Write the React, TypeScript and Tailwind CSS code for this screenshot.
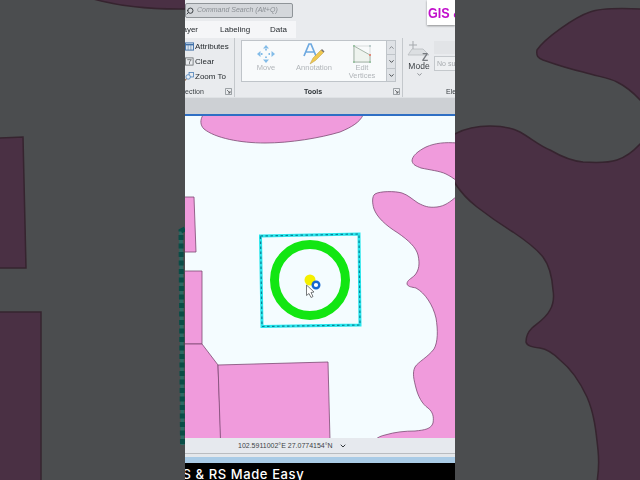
import { Search, ChevronDown, ChevronUp } from "lucide-react";

const SideLeft = () => (
  <svg viewBox="0 0 185 480" className="w-[185px] h-[480px] shrink-0 block">
    <rect width="185" height="480" fill="#4b4d4f" />
    <g fill="#4a3044" stroke="#36242f" strokeWidth="1.5">
      <path d="M90 -2 Q130 10 187 9 L187 -2 Z" />
      <path d="M-2 138 L23 137 L26 268 L-2 268 Z" />
      <path d="M-2 312 L41 312 L41 482 L-2 482 Z" />
    </g>
    <path d="M185 229 L181 231 L182.500 445" fill="none" stroke="#2a6a64" strokeWidth="3.500" />
    <path d="M185 229 L181 231 L182.500 445" fill="none" stroke="#0a4d47" strokeWidth="5" strokeDasharray="5 3.500" />
  </svg>
);

const SideRight = () => (
  <svg viewBox="455 0 185 480" className="w-[185px] h-[480px] shrink-0 block">
    <rect x="455" width="185" height="480" fill="#4b4d4f" />
    <g fill="#4a3044" stroke="#36242f" strokeWidth="1.5">
      <path d="M642 9 C620 8 600 8 590 12 C575 17 545 38 537 50 C536 56 538 58 543 60 C560 66 570 69 583 72 C600 77 610 78 617 82 C627 87 634 93 642 102 Z" />
      <path d="M453 135 C465 128 478 126 490 126 C505 126 512 128 520 132 C532 139 540 146 550 150 C562 157 572 161 583 162 C598 163 608 163 617 160 C627 157 634 151 642 142 L642 482 L597 482 C599 470 599 460 598 450 C596 430 594 413 587 397 C580 382 570 368 560 360 C553 353 547 349 540 348 C532 347 527 346 526 342 C526 336 528 332 532 328 C538 323 546 318 550 310 C554 303 554 296 553 290 C552 275 549 265 543 257 C535 247 525 240 513 232 C500 224 490 217 477 207 C468 200 460 192 453 180 Z" />
    </g>
  </svg>
);

const MoveIcon = () => (
  <svg viewBox="0 0 20 20" className="w-[20px] h-[20px]" fill="none" stroke="#83bce8" strokeWidth="1.800">
    <path d="M10 1 L7 4.500 H13 Z" fill="#83bce8" stroke="none" />
    <path d="M10 19 L7 15.500 H13 Z" fill="#83bce8" stroke="none" />
    <path d="M1 10 L4.500 7 V13 Z" fill="#83bce8" stroke="none" />
    <path d="M19 10 L15.500 7 V13 Z" fill="#83bce8" stroke="none" />
    <path d="M10 5 V7.500 M10 12.500 V15 M5 10 H7.500 M12.500 10 H15" strokeDasharray="1.500 1" />
  </svg>
);

const AnnotationIcon = () => (
  <svg viewBox="0 0 22 22" className="w-[22px] h-[22px]">
    <path d="M1 13 L6 1 H8 L13 13 M3 9 H11" fill="none" stroke="#6ea9e0" strokeWidth="1.700" />
    <path d="M7 21 L10 15 L18 7 L20.500 9.500 L12.500 17.500 Z" fill="#f0c84f" stroke="#b89a45" strokeWidth="0.500" />
    <path d="M18 7 L19 6 L21.500 8.500 L20.500 9.500 Z" fill="#77706a" />
  </svg>
);

const VerticesIcon = () => (
  <svg viewBox="0 0 20 20" className="w-[20px] h-[20px]">
    <path d="M2 2 L18 2 V18 H2 Z" fill="none" stroke="#cfd4d6" strokeWidth="0.800" />
    <path d="M2 2 L18 11 V18 H2 Z" fill="#eef3ee" stroke="#9cae9f" strokeWidth="0.900" />
    <rect x="1" y="1" width="2" height="2" fill="#9cc2a4" />
    <rect x="17" y="1" width="2" height="2" fill="#bcc" />
    <rect x="17" y="10" width="2" height="2" fill="#e08a7a" />
    <rect x="17" y="17" width="2" height="2" fill="#9cc2a4" />
    <rect x="1" y="17" width="2" height="2" fill="#9cc2a4" />
  </svg>
);

const ModeIcon = () => (
  <svg viewBox="0 0 24 20" className="w-[24px] h-[20px]">
    <path d="M5 8 H16 L22 14 H1 Z" fill="#dcdfe2" stroke="#b7bbbf" strokeWidth="0.800" />
    <path d="M6 0 V8 M2 4 H10" stroke="#a5a9ad" strokeWidth="1" />
    <text x="15" y="20" fontSize="10" fontWeight="700" fill="#777b80" fontFamily="'Liberation Sans', sans-serif">Z</text>
  </svg>
);

const Launcher = () => (
  <svg viewBox="0 0 7 7" className="w-[7px] h-[7px] shrink-0">
    <path d="M0.500 0.500 H6.500 V6.500 H0.500 Z" fill="none" stroke="#7d8286" strokeWidth="0.700" />
    <path d="M2 2 L5 5 M5 3 V5 H3" fill="none" stroke="#55595c" strokeWidth="0.800" />
  </svg>
);

const Tool = ({ icon, label }: { icon: React.ReactNode; label: React.ReactNode }) => (
  <div className="w-[48px] h-full flex flex-col items-center pt-[2px]">
    <div className="h-[21px] flex items-center justify-center">{icon}</div>
    <div className="text-[7.500px] leading-[8px] text-[#b1b5b9] text-center">{label}</div>
  </div>
);

const RowIcon = ({ kind }: { kind: "attr" | "clear" | "zoom" }) => (
  <svg viewBox="0 0 10 10" className="w-[9px] h-[9px] shrink-0">
    {kind === "attr" && (
      <g>
        <rect x="0.500" y="1" width="9" height="8" fill="#dbe6f2" stroke="#3f6fa8" />
        <path d="M0.500 3 H9.500" stroke="#3f6fa8" strokeWidth="1.500" />
        <path d="M3.500 3 V9 M6.500 3 V9" stroke="#5f7f9f" strokeWidth="0.700" />
      </g>
    )}
    {kind === "clear" && (
      <g fill="none" stroke="#55595c" strokeWidth="0.800">
        <rect x="0.500" y="1" width="8.500" height="8" />
        <path d="M2.500 3 L7 3 L5 5.500 V8" />
      </g>
    )}
    {kind === "zoom" && (
      <g fill="none" strokeWidth="0.900">
        <rect x="4.500" y="0.500" width="5" height="5" stroke="#4a7fb8" />
        <circle cx="3.500" cy="5.500" r="2.500" stroke="#4a7fb8" fill="#e8f0f8" />
        <path d="M1.500 7.500 L0 9.500" stroke="#8a5a3a" strokeWidth="1.200" />
      </g>
    )}
  </svg>
);

const SelectionRow = ({ icon, label }: { icon: React.ReactNode; label: string }) => (
  <div className="h-[15px] flex items-center gap-[1px]">
    {icon}
    <span className="text-[8px] leading-none text-[#1f2428] whitespace-nowrap">{label}</span>
  </div>
);

const Ribbon = () => (
  <div className="relative h-[116px] shrink-0 bg-[#e9ebee] border-b-2 border-[#2f6fc4] overflow-hidden blur-[0.400px]">
    <div className="h-[21px] flex items-center">
      <div className="w-[108px] h-[15px] bg-[#d4d7db] border border-[#8f9498] rounded-[2px] flex items-center gap-[3px] overflow-hidden">
        <Search className="w-[8px] h-[8px] text-[#3c4145] -scale-x-100 shrink-0" strokeWidth={3} />
        <span className="text-[7px] italic text-[#8b9095] whitespace-nowrap">Command Search (Alt+Q)</span>
      </div>
    </div>
    <div className="h-[17px] w-[111px] bg-[#f5f6f8] flex items-center text-[8px] text-[#1f2428] overflow-hidden">
      <span className="w-[35px] shrink-0 -ml-[7px] whitespace-nowrap">Layer</span>
      <span className="w-[50px] ml-[7px] shrink-0 whitespace-nowrap">Labeling</span>
      <span className="shrink-0">Data</span>
    </div>
    <div className="h-[59px] flex">
      <div className="w-[50px] shrink-0 border-r border-[#c4c8cc] flex flex-col pt-[1px] overflow-hidden">
        <SelectionRow icon={<RowIcon kind="attr" />} label="Attributes" />
        <SelectionRow icon={<RowIcon kind="clear" />} label="Clear" />
        <SelectionRow icon={<RowIcon kind="zoom" />} label="Zoom To" />
        <div className="mt-[4px] flex items-center justify-between pr-[2px]">
          <span className="text-[7px] leading-none text-[#3a3f43] -ml-[10px]">Selection</span>
          <Launcher />
        </div>
      </div>
      <div className="w-[168px] shrink-0 pl-[6px] pr-[2px] border-r border-[#c4c8cc] flex flex-col pt-[2px]">
        <div className="h-[42px] w-[155px] flex bg-[#f8fafb] border border-[#bfc4c9]">
          <div className="w-[144px] flex shrink-0">
            <Tool icon={<MoveIcon />} label="Move" />
            <Tool icon={<AnnotationIcon />} label="Annotation" />
            <Tool icon={<VerticesIcon />} label={<>Edit<br />Vertices</>} />
          </div>
          <div className="flex-1 flex flex-col border-l border-[#bfc4c9] bg-[#dfe2e6]">
            <div className="h-[14px] flex items-center justify-center border-b border-[#bfc4c9]"><ChevronUp className="w-[7px] h-[7px] text-[#7b8085]" strokeWidth={3} /></div>
            <div className="h-[14px] flex items-center justify-center border-b border-[#bfc4c9]"><ChevronDown className="w-[7px] h-[7px] text-[#33383c]" strokeWidth={3} /></div>
            <div className="flex-1 flex items-center justify-center"><ChevronDown className="w-[7px] h-[7px] text-[#33383c]" strokeWidth={3} /></div>
          </div>
        </div>
        <div className="mt-[6px] flex items-center">
          <span className="flex-1 text-center text-[7px] leading-none text-[#2d3236] font-bold pr-[8px]">Tools</span>
          <Launcher />
        </div>
      </div>
      <div className="flex-1 flex pl-[4px] pt-[3px] overflow-hidden">
        <div className="w-[24px] shrink-0 flex flex-col items-center">
          <ModeIcon />
          <span className="text-[8.500px] leading-[10px] text-[#3a3f43]">Mode</span>
          <ChevronDown className="w-[7px] h-[7px] text-[#6b7075]" strokeWidth={2.500} />
        </div>
        <div className="ml-[3px] flex flex-col shrink-0">
          <div className="w-[30px] h-[13px] bg-[#e2e4e7]" />
          <div className="mt-[2px] w-[30px] h-[15px] bg-[#eef0f2] border border-[#c4c8cc] text-[7px] leading-[13px] pl-[2px] text-[#a6aaae] whitespace-nowrap">No sub</div>
          <div className="mt-[17px] pl-[12px] text-[7px] leading-none text-[#3a3f43] whitespace-nowrap">Elements</div>
        </div>
      </div>
    </div>
    <div className="h-[17px] bg-[#cdd0d4] border-t border-[#dfe2e5]" />
    <div className="absolute right-0 top-0 w-[28px] h-[25px] bg-white shadow-[0_1px_2px_rgba(0,0,0,0.4)] overflow-hidden flex items-center pl-[1px]">
      <span className="text-[15px] leading-none font-bold text-[#c20fcc] whitespace-nowrap scale-x-[0.84] origin-left">GIS &amp;</span>
    </div>
  </div>
);

const MapCanvas = () => (
  <svg viewBox="185 116 270 322" className="w-[270px] h-[322px] shrink-0 block bg-[#f4fcff] blur-[0.300px]">
    <g fill="#f09bdc" stroke="#7b4a72" strokeWidth="0.800">
      <path d="M203 115 C200 120 200 125 204 129 C215 138 240 143 265 143 C290 143 320 138 340 132 C352 127 360 122 363 115 Z" />
      <path d="M457 143 C445 142 435 143 426 147 C418 151 412 156 412 161 C413 165 416 166 421 168 C430 170 440 171 446 174 C450 176 453 178 457 181 Z" />
      <path d="M457 196 C450 202 445 206 437 207 C428 208 424 206 418 203 C412 199 408 195 402 193 C395 191 380 191 375 194 C372 196 372 203 374 209 C377 217 385 225 398 233 C408 240 416 247 418 255 C420 264 419 270 415 275 C411 279 407 280 407 284 C408 287 412 287 416 288 C425 293 433 305 436 318 C438 330 438 342 434 349 C428 357 418 362 415 367 C412 373 414 380 416 388 C418 396 422 404 428 408 C433 412 434 417 433 423 C431 429 425 430 415 431 C405 431 395 432 385 435 C381 436 378 437 375 440 L457 440 Z" />
      <path d="M183 197 L194 197 L196 252 L183 252 Z" />
      <path d="M183 271 L202 271 L202 344 L183 344 Z" />
      <path d="M183 344 L202 344 L218 365 L221 440 L183 440 Z" />
      <path d="M218 365 L328 362 L330 440 L220.500 440 Z" />
    </g>
    <path d="M260.500 236 L359 234 L360 325 L262 326.500 Z" fill="none" stroke="#27e6ec" strokeWidth="3" />
    <path d="M260.500 236 L359 234 L360 325 L262 326.500 Z" fill="none" stroke="#0b7f96" strokeWidth="1.200" strokeDasharray="2.500 2.500" />
    <circle cx="310" cy="280" r="35.500" fill="none" stroke="#12e612" strokeWidth="9" />
    <circle cx="310" cy="280" r="5.500" fill="#f5f000" />
    <circle cx="316" cy="285" r="3.300" fill="#ffffff" stroke="#1668d0" strokeWidth="2.400" />
    <path d="M306.500 285 L306.500 295.500 L309 293.500 L311 297.500 L313 296.500 L311 292.500 L314 292 Z" fill="#ffffff" stroke="#55595c" strokeWidth="0.800" />
  </svg>
);

const Footer = () => (
  <div className="h-[42px] shrink-0 flex flex-col overflow-hidden">
    <div className="h-[16px] bg-[#e6e9ee] border-b border-[#b9bcc0] flex items-center shrink-0">
      <span className="ml-[53px] text-[7px] leading-none text-[#3d4246] whitespace-nowrap">102.5911002°E 27.0774154°N</span>
      <ChevronDown className="ml-[6px] w-[8px] h-[8px] text-[#33383c]" strokeWidth={3} />
    </div>
    <div className="h-[3px] bg-[#e4e7eb] shrink-0" />
    <div className="h-[6px] bg-[#a9cbe6] shrink-0" />
    <div className="flex-1 bg-black flex items-end overflow-hidden">
      <span className="-ml-[17px] -mb-[2px] text-[13px] leading-[15px] text-white whitespace-nowrap font-medium tracking-[0.600px] font-['Inter',sans-serif]">GIS &amp; RS Made Easy</span>
    </div>
  </div>
);

export default function App() {
  return (
    <div className="w-[640px] h-[480px] flex overflow-hidden bg-black font-['Liberation_Sans',sans-serif]">
      <SideLeft />
      <div className="w-[270px] h-[480px] shrink-0 flex flex-col overflow-hidden">
        <Ribbon />
        <MapCanvas />
        <Footer />
      </div>
      <SideRight />
    </div>
  );
}
